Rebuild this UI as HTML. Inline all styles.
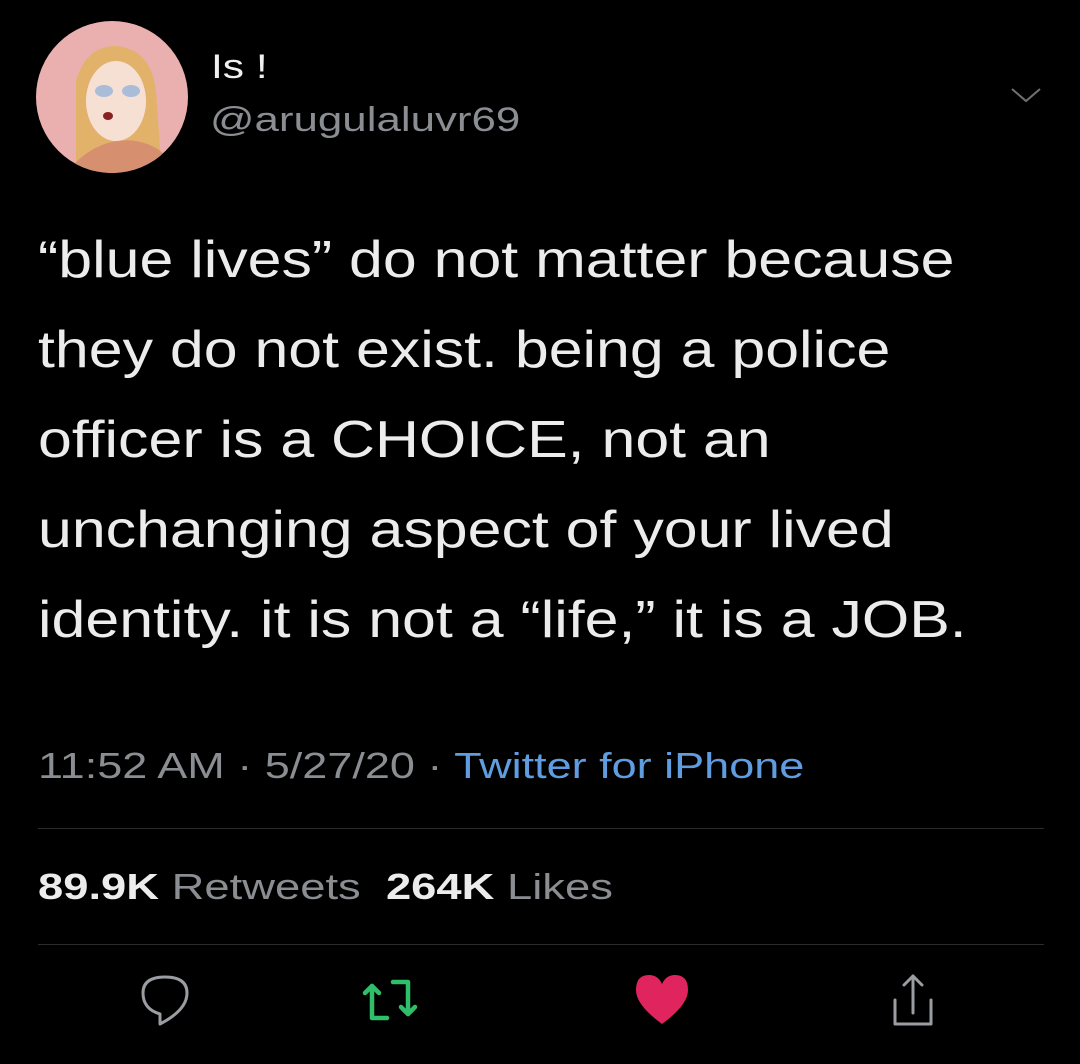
<!DOCTYPE html>
<html><head><style>
body{margin:0;background:#000;width:1080px;height:1064px;overflow:hidden;font-family:"Liberation Sans",Arial,sans-serif;position:relative;color:#e8e8e8}
.a{position:absolute}
.s{transform-origin:0 0;white-space:nowrap}
.t{left:38px;font-size:52px;line-height:52px;color:#ececec;transform:scaleX(1.17)}
</style></head><body>
<div class="a" style="left:36px;top:21px;width:152px;height:152px;border-radius:50%;background:#eab0b0;overflow:hidden">
<svg width="152" height="152" viewBox="0 0 152 152">
<path d="M40 150 L40 60 Q50 25 80 25 Q115 28 120 70 L125 140 Z" fill="#e2b26a"/>
<ellipse cx="80" cy="80" rx="30" ry="40" fill="#f6e0d4"/>
<ellipse cx="68" cy="70" rx="9" ry="6" fill="#a9bcd8"/><ellipse cx="95" cy="70" rx="9" ry="6" fill="#a9bcd8"/>
<ellipse cx="72" cy="95" rx="5" ry="4" fill="#8a2020"/>
<path d="M30 152 Q60 115 100 120 Q130 125 140 152 Z" fill="#d69070"/>
</svg></div>
<div class="a s" style="left:211px;top:48px;font-size:34px;color:#f0f0f0;transform:scaleX(1.25)">Is !</div>
<div class="a s" style="left:210px;top:101px;font-size:34px;color:#8a8d91;transform:scaleX(1.29)">@arugulaluvr69</div>
<svg class="a" style="left:1006px;top:85px" width="40" height="20"><path d="M6 4 L20 16 L34 4" stroke="#6e7175" stroke-width="2" fill="none"/></svg>
<div class="a s t" style="top:234px">“blue lives” do not matter because</div>
<div class="a s t" style="top:324px">they do not exist. being a police</div>
<div class="a s t" style="top:414px">officer is a CHOICE, not an</div>
<div class="a s t" style="top:504px">unchanging aspect of your lived</div>
<div class="a s t" style="top:594px">identity. it is not a “life,” it is a JOB.</div>
<div class="a s" style="left:38px;top:745px;font-size:36px;color:#8a8d91;transform:scaleX(1.25)">11:52 AM · 5/27/20 · <span style="color:#5f9de0">Twitter for iPhone</span></div>
<div class="a" style="left:38px;right:36px;top:828px;height:1px;background:#2a2c2f"></div>
<div class="a s" style="left:38px;top:866px;font-size:36px;color:#8a8d91;transform:scaleX(1.26)"><b style="color:#ececec">89.9K</b> Retweets&nbsp; <b style="color:#ececec">264K</b> Likes</div>
<div class="a" style="left:38px;right:36px;top:944px;height:1px;background:#2a2c2f"></div>
<svg class="a" style="left:0;top:960px" width="1080" height="90">
<path d="M160 64 L160 54 Q143 49 143 33 Q143 17 165 17 Q187 17 187 33 Q187 50 160 64 Z" stroke="#9a9da1" stroke-width="3" fill="none" stroke-linejoin="round"/>
<g stroke="#2fbf6a" stroke-width="4.5" fill="none" stroke-linecap="round" stroke-linejoin="round">
<path d="M372 26 L372 58 L387 58"/><path d="M365 33 L372 26 L379 33"/>
<path d="M393 22 L408 22 L408 54"/><path d="M401 47 L408 54 L415 47"/>
</g>
<path d="M662 64 Q636 45 636 30 Q636 15 649 15 Q658 15 662 24 Q666 15 675 15 Q688 15 688 30 Q688 45 662 64 Z" fill="#e0245e"/>
<g stroke="#9a9da1" stroke-width="3" fill="none" stroke-linecap="round" stroke-linejoin="round">
<path d="M895 40 L895 64 L931 64 L931 40"/><path d="M913 53 L913 16"/><path d="M904 25 L913 16 L922 25"/>
</g>
</svg>
</body></html>
